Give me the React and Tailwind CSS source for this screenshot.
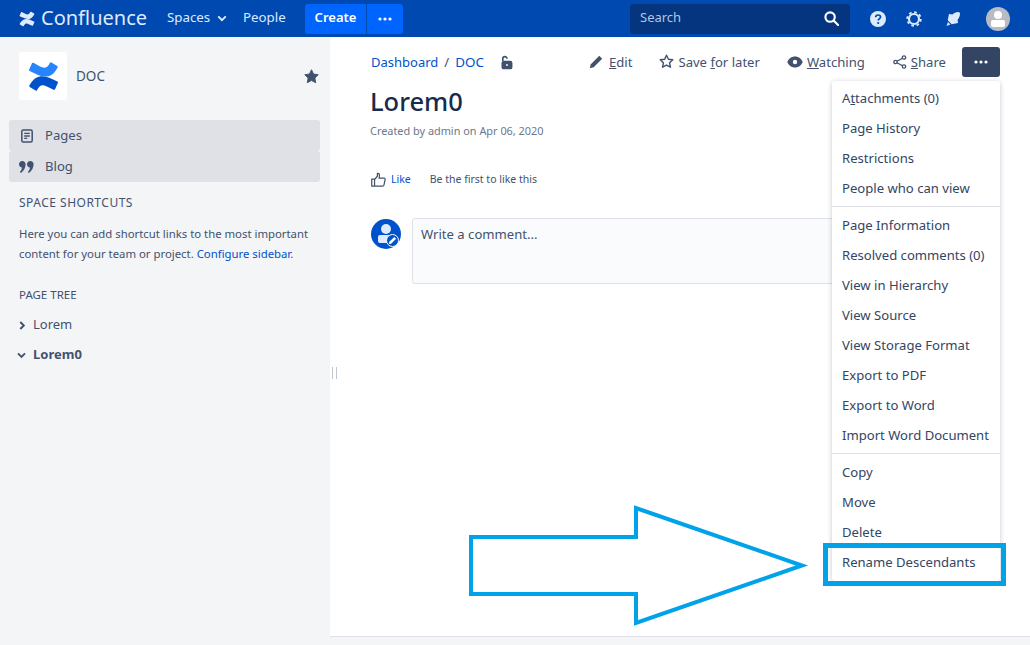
import React from "react";

const Mark = ({ className, top = "#fff", bottom = "#fff" }) => (
  <svg viewBox="0 0 32 32" className={className}>
    <path d="M2.500 23.600c-.4.6-.8 1.300-1.100 1.800-.3.500-.1 1.100.4 1.400l6 3.700c.5.300 1.200.1 1.500-.4.2-.4.6-1 1-1.700 2.700-4.400 5.400-3.900 10.200-1.600l5.900 2.800c.6.300 1.200 0 1.500-.5l2.900-6.500c.2-.5 0-1.200-.5-1.400-1.300-.6-3.800-1.800-6.100-2.900C16 14.200 7.800 14.500 2.500 23.600z" fill={bottom} />
    <path d="M29.500 8.400c.4-.6.800-1.300 1.100-1.800.3-.5.100-1.100-.4-1.400l-6-3.700c-.5-.3-1.200-.1-1.500.4-.2.400-.6 1-1 1.700-2.700 4.400-5.400 3.900-10.200 1.600L5.600 1.900c-.6-.3-1.200 0-1.500.5L1.200 8.900c-.2.500 0 1.200.5 1.400 1.300.6 3.800 1.800 6.100 2.900C16 17.800 24.200 17.500 29.500 8.400z" fill={top} />
  </svg>
);

const Dots = () => (
  <svg viewBox="0 0 14 4" className="w-[14px] h-[4px]" fill="#fff">
    <circle cx="2" cy="2" r="1.600" />
    <circle cx="7" cy="2" r="1.600" />
    <circle cx="12" cy="2" r="1.600" />
  </svg>
);

const Item = ({ children }) => (
  <div className="h-[30px] pt-[2px] flex items-center px-[10px] text-[#344563] whitespace-nowrap"><span>{children}</span></div>
);

const Divider = () => <div className="h-px bg-[#DFE1E6] my-[3px]" />;

const Action = ({ icon, children, className = "" }) => (
  <div className={"flex items-center gap-[4px] text-[#42526E] " + className}>
    {icon}
    <span className="pt-[2px]">{children}</span>
  </div>
);

export default function App() {
  return (
    <div className="relative w-[1030px] h-[645px] overflow-hidden bg-white text-[13.100px] flex flex-col font-['Noto_Sans','Open_Sans',sans-serif]">
      {/* top bar */}
      <header className="h-[37px] shrink-0 bg-[#0049B0] flex items-center text-[#DEEBFF]">
        <Mark className="w-[16px] h-[16px] ml-[19px]" top="#DEEBFF" bottom="#DEEBFF" />
        <span className="ml-[6px] w-[106px] text-[20px] leading-none pb-[2px]">Confluence</span>
        <span className="ml-[20px] w-[43px] text-[13.300px] pb-[1px]">Spaces</span>
        <svg viewBox="0 0 12 8" className="w-[10px] h-[7px] ml-[7px]" fill="none" stroke="#DEEBFF" strokeWidth="2.400">
          <path d="M1.500 1.500 6 6l4.500-4.500" />
        </svg>
        <span className="ml-[16px] w-[42px] text-[13.300px] pb-[1px]">People</span>
        <div className="ml-[20px] flex h-[30px] gap-px">
          <div className="w-[61px] bg-[#0065FF] rounded-l-[3px] flex items-center justify-center text-white font-semibold text-[13px] pb-[1px]">Create</div>
          <div className="w-[36px] bg-[#0065FF] rounded-r-[3px] flex items-center justify-center"><Dots /></div>
        </div>
        <div className="ml-[227px] w-[220px] h-[30px] bg-[#04357E] rounded-[3px] flex items-center justify-between px-[10px] text-[#B3C6E4] text-[13px]">
          <span className="pb-[1px]">Search</span>
          <svg viewBox="0 0 16 16" className="w-[15px] h-[15px] mr-[1px]" fill="none" stroke="#fff" strokeWidth="2.300">
            <circle cx="6.500" cy="6.500" r="5" />
            <path d="m10.500 10.500 4.500 4.500" strokeLinecap="round" />
          </svg>
        </div>
        <svg viewBox="0 0 16 16" className="w-[16px] h-[16px] ml-[20px]">
          <circle cx="8" cy="8" r="8" fill="#DEEBFF" />
          <path d="M5.600 6.300C5.700 4.800 6.700 4 8.100 4c1.400 0 2.400.8 2.400 2 0 1.900-2.300 1.800-2.300 3.500" fill="none" stroke="#0049B0" strokeWidth="1.700" />
          <circle cx="8.200" cy="12" r="1.100" fill="#0049B0" />
        </svg>
        <svg viewBox="0 0 16 16" className="w-[16px] h-[16px] ml-[20px]" fill="none" stroke="#DEEBFF">
          <circle cx="8" cy="8" r="5" strokeWidth="2.200" />
          <circle cx="8" cy="8" r="6.800" strokeWidth="1.800" strokeDasharray="2.670 2.670" />
        </svg>
        <svg viewBox="0 0 16 16" className="w-[16px] h-[16px] ml-[23px]" fill="#DEEBFF">
          <path d="M13.200 1c1.200 0 1.900.7 1.800 1.900-.2 2.400-1.100 4.300-2.400 5.800l.4 3.300-6.300 1.200L2.700 9.300 4 3.100l3.400.4C9 2 10.900 1.200 13.200 1z" />
          <path d="M3 11l2.400 2.400L1.500 15z" />
        </svg>
        <div className="ml-[25px] w-[24px] h-[24px] rounded-full bg-[#B8BBC4] flex flex-col items-center overflow-hidden">
          <div className="mt-[4px] w-[8px] h-[8px] rounded-full bg-white" />
          <div className="mt-[1px] w-[14px] h-[7px] rounded-[2px] bg-white" />
        </div>
      </header>

      <div className="flex flex-1 min-h-0">
        {/* sidebar */}
        <aside className="w-[330px] shrink-0 bg-[#F4F5F7] text-[#42526E] flex flex-col">
          <div className="flex items-center mt-[15px] pl-[19px] pr-[10px]">
            <div className="w-[48px] h-[48px] bg-white rounded-[3px] flex items-center justify-center">
              <Mark className="w-[31px] h-[31px]" top="#2684FF" bottom="#0052CC" />
            </div>
            <span className="ml-[9px] flex-1 text-[13.500px]">DOC</span>
            <svg viewBox="0 0 16 16" className="w-[15px] h-[15px] mr-[1px]" fill="#42526E">
              <path d="M8 .8l2.200 4.600 5 .7-3.600 3.500.9 5L8 12.200 3.500 14.600l.9-5L.8 6.100l5-.7z" stroke="#42526E" strokeLinejoin="round" />
            </svg>
          </div>
          <div className="mt-[20px] ml-[9px] mr-[10px] flex flex-col">
            <div className="h-[31px] bg-[#DFE1E6] rounded-[3px] flex items-center">
              <svg viewBox="0 0 14 14" className="w-[14px] h-[14px] ml-[11px]" fill="none" stroke="#42526E" strokeWidth="1.500">
                <rect x="1.800" y="1" width="10.400" height="12" rx="1.500" />
                <path d="M4.200 4.400h5.600M4.200 7h5.600M4.200 9.400h3" strokeWidth="1.300" />
              </svg>
              <span className="ml-[11px]">Pages</span>
            </div>
            <div className="h-[31px] bg-[#DFE1E6] rounded-[3px] flex items-center">
              <svg viewBox="0 0 15 12" className="w-[15px] h-[12px] ml-[10px]" fill="#42526E">
                <path d="M3.300 0C5.200 0 6.600 1.400 6.600 3.200c0 3.400-1.900 6.800-4.700 8.800L.9 10.900c1-1 1.800-2.200 2.100-4.400C1.300 6.400 0 5 0 3.200 0 1.400 1.400 0 3.300 0z" />
                <path d="M11.300 0c1.900 0 3.300 1.400 3.300 3.200 0 3.400-1.900 6.800-4.700 8.800l-1-1.100c1-1 1.800-2.200 2.100-4.400C9.300 6.400 8 5 8 3.200 8 1.400 9.400 0 11.300 0z" />
              </svg>
              <span className="ml-[11px]">Blog</span>
            </div>
          </div>
          <div className="mt-[13px] pl-[19px] text-[12px] leading-[16px] tracking-[0.5px]">SPACE SHORTCUTS</div>
          <p className="mt-[13px] pl-[19px] pr-[8px] text-[11.350px] leading-[20px]">
            Here you can add shortcut links to the most important content for your team or project.{" "}
            <span className="text-[#0052CC]">Configure sidebar</span>.
          </p>
          <div className="mt-[23px] pl-[19px] text-[11.500px] leading-[16px]">PAGE TREE</div>
          <div className="mt-[7px] h-[30px] flex items-center pl-[19px]">
            <svg viewBox="0 0 8 10" className="w-[7px] h-[9px]" fill="none" stroke="#42526E" strokeWidth="2.200">
              <path d="M1.500 1 5.500 5l-4 4" />
            </svg>
            <span className="ml-[7px] text-[13px]">Lorem</span>
          </div>
          <div className="h-[30px] flex items-center pl-[17px]">
            <svg viewBox="0 0 10 8" className="w-[9px] h-[7px]" fill="none" stroke="#42526E" strokeWidth="2.200">
              <path d="M1 1.500l4 4 4-4" />
            </svg>
            <span className="ml-[7px] text-[13px] font-bold">Lorem0</span>
          </div>
        </aside>

        {/* main */}
        <main className="flex-1 flex flex-col min-w-0">
          <div className="flex-1 pl-[41px] pr-[30px]">
            <div className="flex items-center h-[30px] mt-[10px]">
              <span className="text-[#0052CC] text-[13px] pt-[2px]">Dashboard</span>
              <span className="mx-[6px] text-[#42526E] pt-[2px]">/</span>
              <span className="text-[#0052CC] text-[13.400px] pt-[1px]">DOC</span>
              <svg viewBox="0 0 14 16" className="w-[13px] h-[15px] ml-[16px]" fill="none" stroke="#42526E" strokeWidth="1.800">
                <path d="M3 6.500V4a2.300 2.300 0 0 1 4.600 0" />
                <rect x="2.500" y="7" width="10" height="7.500" rx="1.500" fill="#42526E" />
                <circle cx="7.500" cy="10.700" r="1" fill="#fff" stroke="none" />
              </svg>
              <div className="flex-1" />
              <Action icon={
                <svg viewBox="0 0 14 14" className="w-[14px] h-[14px] mr-[2px]" fill="#42526E"><path d="M10.300 .8l2.900 2.900-8.500 8.500-3.900 1 1-3.900z" /></svg>
              }><span className="underline">E</span>dit</Action>
              <Action className="ml-[27px]" icon={
                <svg viewBox="0 0 16 16" className="w-[15px] h-[15px]" fill="none" stroke="#42526E" strokeWidth="1.500" strokeLinejoin="round"><path d="M8 1.300l2 4.300 4.700.6-3.400 3.200.9 4.700L8 11.800l-4.200 2.300.9-4.700L1.300 6.200 6 5.600z" /></svg>
              }>Save <span className="underline">f</span>or later</Action>
              <Action className="ml-[27px]" icon={
                <svg viewBox="0 0 16 12" className="w-[16px] h-[12px]"><path d="M8 .5C4.500.5 1.600 2.700.3 6c1.300 3.300 4.200 5.500 7.700 5.500s6.400-2.200 7.700-5.500C14.400 2.700 11.500.5 8 .5z" fill="#42526E" /><circle cx="8" cy="6" r="2.200" fill="#fff" /></svg>
              }><span className="underline">W</span>atching</Action>
              <Action className="ml-[28px]" icon={
                <svg viewBox="0 0 14 14" className="w-[14px] h-[14px]" fill="none" stroke="#42526E" strokeWidth="1.300"><circle cx="11" cy="2.500" r="1.700" /><circle cx="11" cy="11.500" r="1.700" /><circle cx="2.500" cy="7" r="1.700" /><path d="M4 6.200l5.500-3M4 7.800l5.500 3" /></svg>
              }><span className="underline">S</span>hare</Action>
              <div className="ml-[16px] w-[38px] h-[30px] bg-[#344563] rounded-[3px] flex items-center justify-center"><Dots /></div>
            </div>
            <h1 className="mt-[6px] -ml-[1px] text-[25.500px] leading-[36px] font-medium text-[#172B4D]">Lorem0</h1>
            <div className="mt-[4px] -ml-[1px] text-[10.900px] leading-[16px] text-[#6B778C]">Created by admin on Apr 06, 2020</div>
            <div className="mt-[32px] flex items-center h-[16px] text-[10.500px]">
              <svg viewBox="0 0 16 16" className="w-[15px] h-[15px]" fill="none" stroke="#42526E" strokeWidth="1.300">
                <path d="M.8 7.500h3v7.500h-3zM3.800 8l3-3.500V1.500c1.500-.5 2.300.8 2.200 2L8.700 6.500H14c.8 0 1.300.7 1.100 1.500l-1.300 6c-.2.7-.7 1-1.300 1H3.800" />
              </svg>
              <span className="ml-[5px] pt-[2px] text-[#0052CC]">Like</span>
              <span className="ml-[19px] pt-[2px] text-[#42526E]">Be the first to like this</span>
            </div>
            <div className="mt-[31px] flex items-start">
              <div className="relative mt-[1px] w-[30px] h-[30px] rounded-full bg-[#0052CC] overflow-hidden shrink-0 flex flex-col items-center">
                <div className="mt-[5px] w-[10px] h-[10px] rounded-full bg-[#DEEBFF]" />
                <div className="mt-[1px] w-[17px] h-[8px] rounded-[2px] bg-[#DEEBFF]" />
              </div>
              <div className="ml-[11px] flex-1 h-[66px] bg-[#FAFBFC] border border-[#DFE1E6] rounded-[3px] px-[8px] py-[6px] text-[#42526E]">Write a comment...</div>
            </div>
          </div>
          <div className="h-[9px] shrink-0 bg-[#F4F5F7] border-t border-[#DFE1E6]" />
        </main>
      </div>

      {/* badge on avatar */}
      <div className="absolute left-[386px] top-[234px] w-[13px] h-[13px] rounded-full bg-[#0052CC] border border-white flex items-center justify-center">
        <svg viewBox="0 0 10 10" className="w-[9px] h-[9px]" fill="#fff"><path d="M7 1 9 3 3.500 8.500 1 9l.5-2.500z" /></svg>
      </div>

      {/* sidebar resize handle */}
      <div className="absolute left-[332px] top-[367px] w-[5px] h-[12px] border-x border-[#C1C7D0]" />

      {/* dropdown menu */}
      <div className="absolute left-[832px] top-[81px] w-[168px] bg-white rounded-[3px] shadow-[0_1px_5px_rgba(9,30,66,0.25)] pt-[2px] pb-[4px]">
        <Item>A<span className="underline">t</span>tachments (0)</Item>
        <Item>Page History</Item>
        <Item>Restrictions</Item>
        <Item>People who can view</Item>
        <Divider />
        <Item>Page Information</Item>
        <Item>Resolved comments (0)</Item>
        <Item>View in Hierarchy</Item>
        <Item>View Source</Item>
        <Item>View Storage Format</Item>
        <Item>Export to PDF</Item>
        <Item>Export to Word</Item>
        <Item>Import Word Document</Item>
        <Divider />
        <Item>Copy</Item>
        <Item>Move</Item>
        <Item>Delete</Item>
        <Item>Rename Descendants</Item>
      </div>

      {/* annotation */}
      <svg viewBox="0 0 1030 645" className="absolute inset-0 w-[1030px] h-[645px] pointer-events-none" fill="none" stroke="#00A2E8">
        <path d="M471 537H636V508L802 565.500 636 623V594H471Z" strokeWidth="4" strokeLinejoin="miter" />
      </svg>
      <div className="absolute left-[823px] top-[543px] w-[183px] h-[43px] border-[5px] border-[#00A2E8] pointer-events-none" />
    </div>
  );
}
